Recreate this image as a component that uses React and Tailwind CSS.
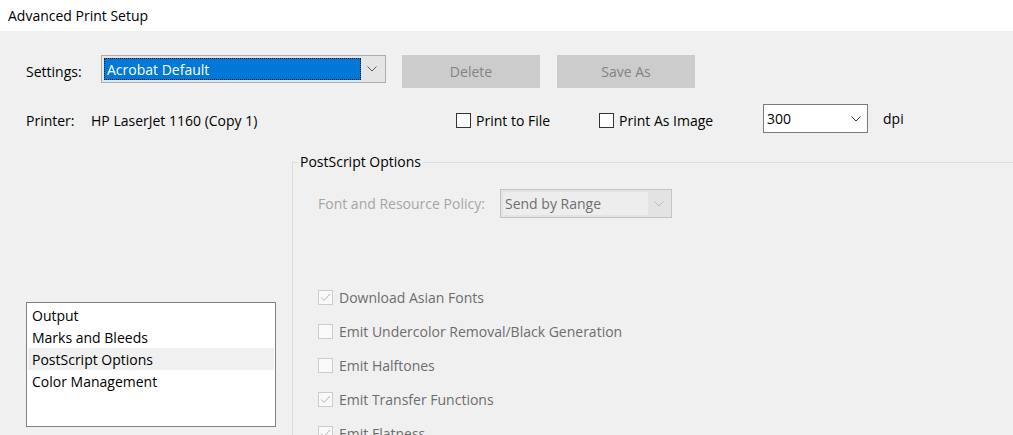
import React from 'react'

const FONT = { fontFamily: '"Open Sans", "Noto Sans", sans-serif' }

function Chevron({ color = '#333333' }) {
  return (
    <svg width="10" height="6" viewBox="0 0 10 6" fill="none">
      <polyline points="0.5,0.5 5,5 9.5,0.5" stroke={color} strokeWidth="1" />
    </svg>
  )
}

function CheckBox({ label, checked = false, disabled = false }) {
  return (
    <div className="flex items-center">
      <div
        className={
          disabled
            ? 'w-[15px] h-[15px] border border-[#cccccc] bg-[#f9f9f9] flex items-center justify-center'
            : 'w-[15px] h-[15px] border border-[#333333] bg-white flex items-center justify-center'
        }
      >
        {checked && (
          <svg width="11" height="9" viewBox="0 0 11 9" fill="none">
            <polyline points="1,4.5 4,7.5 10,1" stroke="#b4b4b4" strokeWidth="1" />
          </svg>
        )}
      </div>
      <span className={disabled ? 'ml-[6px] text-[#6d6d6d]' : 'ml-[5px] text-black'}>{label}</span>
    </div>
  )
}

const panels = ['Output', 'Marks and Bleeds', 'PostScript Options', 'Color Management']

const psOptions = [
  { label: 'Download Asian Fonts', checked: true },
  { label: 'Emit Undercolor Removal/Black Generation', checked: false },
  { label: 'Emit Halftones', checked: false },
  { label: 'Emit Transfer Functions', checked: true },
  { label: 'Emit Flatness', checked: true },
]

export default function App() {
  return (
    <div className="w-[1013px] h-[435px] overflow-hidden bg-[#f0f0f0] text-[14px] text-black" style={FONT}>
      {/* title bar */}
      <div className="h-[31px] bg-white flex items-center pl-[8px] text-[14px]">
        Advanced Print Setup
      </div>

      {/* settings row */}
      <div className="flex items-center pl-[26px] mt-[24px] h-[33px]">
        <span className="w-[75px]">Settings:</span>
        <div className="w-[285px] h-[28px] border border-[#adadad] bg-[#e5e5e5] flex items-center p-[2px] self-start">
          <div className="w-[257px] h-[22px] bg-[#0078d7] border border-dotted border-[#1a1a1a] text-white flex items-center pl-[2px]">
            Acrobat Default
          </div>
          <div className="flex-1 flex items-center justify-center">
            <Chevron color="#5a5a5a" />
          </div>
        </div>
        <button className="ml-[16px] w-[138px] h-[33px] bg-[#cccccc] text-[#838383]">Delete</button>
        <button className="ml-[17px] w-[138px] h-[33px] bg-[#cccccc] text-[#838383]">Save As</button>
      </div>

      {/* printer row */}
      <div className="flex items-center pl-[26px] mt-[16px] h-[29px]">
        <span className="w-[65px] mt-[4px]">Printer:</span>
        <span className="w-[365px] mt-[4px]">HP LaserJet 1160 (Copy 1)</span>
        <div className="w-[143px] mt-[4px]">
          <CheckBox label="Print to File" />
        </div>
        <div className="w-[164px] mt-[4px]">
          <CheckBox label="Print As Image" />
        </div>
        <div className="w-[105px] h-[29px] border border-[#7a7a7a] bg-white flex items-center pl-[3px] pr-[6px]">
          <span className="flex-1">300</span>
          <Chevron />
        </div>
        <span className="ml-[15px]">dpi</span>
      </div>

      {/* lower area */}
      <div className="flex mt-[19px]">
        <div className="w-[292px] h-[283px] flex flex-col justify-end pb-[8px]">
          <div className="ml-[26px] w-[250px] h-[125px] border border-[#828282] bg-white p-px">
            {panels.map((p) => (
              <div
                key={p}
                className={
                  p === 'PostScript Options'
                    ? 'h-[22px] flex items-center pl-[4px] bg-[#f0f0f0]'
                    : 'h-[22px] flex items-center pl-[4px]'
                }
              >
                {p}
              </div>
            ))}
          </div>
        </div>

        <fieldset className="flex-1 border-t border-l border-[#dcdcdc] h-[300px]">
          <legend className="ml-[5px] px-[2px] h-[20px] leading-[20px]">PostScript Options</legend>

          <div className="flex items-center pl-[25px] mt-[17px]">
            <span className="w-[182px] text-[#a6a6a6]">Font and Resource Policy:</span>
            <div className="w-[172px] h-[29px] border border-[#c4c4c4] bg-[#e3e3e3] flex items-center p-[2px]">
              <div className="w-[145px] h-full bg-[#ededed] flex items-center pl-[2px] text-[#6d6d6d]">
                Send by Range
              </div>
              <div className="flex-1 flex items-center justify-center">
                <Chevron color="#bcbcbc" />
              </div>
            </div>
          </div>

          <div className="mt-[62px] pl-[25px]">
            {psOptions.map((o) => (
              <div key={o.label} className="h-[34px] flex items-center">
                <CheckBox label={o.label} checked={o.checked} disabled />
              </div>
            ))}
          </div>
        </fieldset>
      </div>
    </div>
  )
}
